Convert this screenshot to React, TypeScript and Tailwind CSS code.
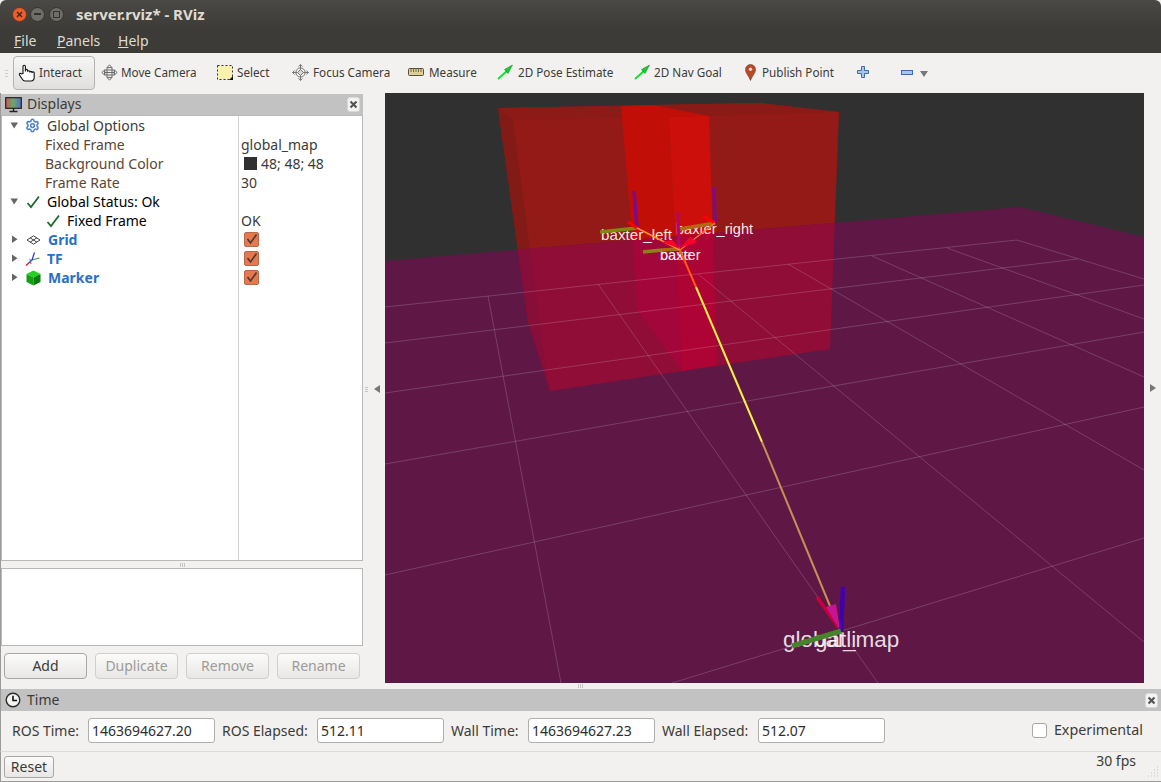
import { Settings } from 'lucide-react';

const floor = '385,261 1020,207 1144,237 1144,683 385,683';

const boxFaces = [
  { pts: '498,108 760,103 839,112 830,349 682,371 550,391 528,322', above: '#931a17', below: '#8f0d37' },
  { pts: '653,105 760,103 839,112 709,116', above: '#8a1a16', below: '#8f0d37' },
  { pts: '498,108 621,106 669,117 513,120', above: '#8c1a16', below: '#8f0d37' },
  { pts: '498,108 513,120 546,372 550,391 528,322', above: '#821a16', below: '#860e38' },
  { pts: '621,106 653,105 709,116 669,117 682,371 637,310 633,248', above: '#c10f08', below: '#a3063a' },
  { pts: '669,117 709,116 717,365 682,371', above: '#cd0f0c', below: '#ae0435' },
];

const gridLines = [
  [385, 307, 1017, 240],
  [385, 343, 1077, 259],
  [385, 393, 1144, 285],
  [385, 464, 1144, 332],
  [385, 575, 1144, 407],
  [672, 683, 1144, 538],
  [488, 296, 561, 683],
  [598, 284, 878, 683],
  [698, 274, 1144, 642],
  [788, 264, 1144, 470],
  [872, 256, 1144, 377],
  [947, 248, 1144, 319],
  [1017, 240, 1144, 279],
];

function Scene() {
  return (
    <svg viewBox="385 93 759 590" className="block w-[759px] h-[590px] font-['Liberation_Sans',sans-serif]">
      <defs>
        <clipPath id="floor-clip">
          <polygon points={floor} />
        </clipPath>
      </defs>
      <rect x="385" y="93" width="759" height="590" fill="#303030" />
      {boxFaces.map((f) => (
        <polygon key={f.pts} points={f.pts} fill={f.above} />
      ))}
      <polygon points={floor} fill="#5f1846" />
      <g clipPath="url(#floor-clip)">
        {boxFaces.map((f) => (
          <polygon key={f.pts} points={f.pts} fill={f.below} />
        ))}
      </g>
      {gridLines.map((l) => (
        <line key={l.join()} x1={l[0]} y1={l[1]} x2={l[2]} y2={l[3]} stroke="#ffffff" strokeOpacity="0.17" strokeWidth="1" />
      ))}

      <g fill="#ffffff" fillOpacity="0.92">
        <text x="601" y="240" fontSize="15.2">baxter_left</text>
        <text x="676" y="234" fontSize="14.6">baxter_right</text>
        <text x="660" y="260" fontSize="14.6">baxter</text>
        <text x="660" y="260" fontSize="14.6" fillOpacity="0.5">base</text>
        <text x="783" y="647" fontSize="22.5" fillOpacity="0.85">global_map</text>
        <text x="815" y="647" fontSize="22.5" fillOpacity="0.85">gatli</text>
      </g>

      {/* path to global_map */}
      <line x1="680" y1="250" x2="696" y2="287" stroke="#ff5a10" strokeWidth="2" />
      <line x1="696" y1="287" x2="762" y2="442" stroke="#f6f04a" strokeWidth="2" />
      <line x1="762" y1="442" x2="830" y2="606" stroke="#c98f55" strokeWidth="2" />
      <line x1="817" y1="597" x2="839" y2="628" stroke="#c8003c" strokeWidth="3.5" />
      <polygon points="826,607 836,604 840,630" fill="#c81494" />
      <line x1="843" y1="587" x2="841" y2="632" stroke="#4000b0" strokeWidth="4.5" />
      <line x1="841" y1="631" x2="792" y2="646" stroke="#47832a" strokeWidth="5" />

      {/* baxter frames */}
      <line x1="678" y1="212" x2="679" y2="250" stroke="#b0086a" strokeWidth="3" />
      <line x1="634" y1="191" x2="637" y2="228" stroke="#7d0a8c" strokeWidth="3.5" />
      <line x1="714" y1="187" x2="715" y2="223" stroke="#7d0a8c" strokeWidth="3.5" />
      <line x1="600" y1="232" x2="637" y2="228" stroke="#7f8a0c" strokeWidth="3.5" />
      <line x1="680" y1="229" x2="715" y2="223" stroke="#b06a10" strokeWidth="3.5" />
      <line x1="643" y1="252" x2="662" y2="250" stroke="#85880f" strokeWidth="3.5" />
      <line x1="662" y1="250" x2="680" y2="249" stroke="#ac6a10" strokeWidth="3.5" />
      <line x1="628" y1="222" x2="637" y2="228" stroke="#ff0000" strokeWidth="3" />
      <line x1="703" y1="216" x2="715" y2="223" stroke="#ff0000" strokeWidth="3" />
      <line x1="637" y1="228" x2="680" y2="250" stroke="#ff9030" strokeWidth="1.5" />
      <line x1="715" y1="223" x2="680" y2="250" stroke="#ff7030" strokeWidth="1.5" />
      <polygon points="662,242 672,240 680,249" fill="#ff0028" />
      <polygon points="680,248 690,237 697,242" fill="#ff0028" />
    </svg>
  );
}

function CloseBtn() {
  return (
    <div className="w-[13px] h-[15px] rounded-[3px] bg-[#f4f4f3] border border-[#d8d8d8] flex items-center justify-center">
      <svg width="9" height="9" viewBox="0 0 9 9">
        <path d="M1.5 1.5 L7.5 7.5 M7.5 1.5 L1.5 7.5" stroke="#555" strokeWidth="2.2" />
      </svg>
    </div>
  );
}

function Expander({ open }: { open?: boolean }) {
  return (
    <svg width="9" height="9" viewBox="0 0 9 9" className="shrink-0">
      {open ? <path d="M0.5 1.5 H8 L4.2 7.5 Z" fill="#666" /> : <path d="M2 0.5 V8 L7.5 4.2 Z" fill="#666" />}
    </svg>
  );
}

function Check() {
  return (
    <svg width="15" height="14" viewBox="0 0 15 14" className="shrink-0">
      <path d="M1.5 8 L5 12 L13 1.5" fill="none" stroke="#1d6a2a" strokeWidth="1.8" />
    </svg>
  );
}

function OrangeBox() {
  return (
    <div className="ml-[3px] w-[15px] h-[15px] rounded-[2px] bg-[#e5784f] border border-[#b8694a] flex items-center justify-center">
      <svg width="13" height="13" viewBox="0 0 13 13">
        <path d="M2.5 6 L5.5 10 L11.5 1.5" fill="none" stroke="#4a3a30" strokeWidth="1.6" />
      </svg>
    </div>
  );
}

function GridIcon() {
  return (
    <svg width="15" height="10" viewBox="0 0 15 10" className="shrink-0">
      <path d="M7.5 0.8 L14 5 L7.5 9.2 L1 5 Z M4.2 2.9 L10.8 7.1 M10.8 2.9 L4.2 7.1" fill="none" stroke="#444" strokeWidth="1" />
    </svg>
  );
}

function TfIcon() {
  return (
    <svg width="16" height="16" viewBox="0 0 16 16" className="shrink-0">
      <path d="M7 9 L14.5 7" stroke="#2fa82f" strokeWidth="1.2" />
      <path d="M7 9 L9.5 1.5" stroke="#2f2fd0" strokeWidth="1.2" />
      <path d="M7 9 L1 14.5" stroke="#e02020" strokeWidth="1.4" />
      <path d="M5 8 L6 13" stroke="#2f6fd0" strokeWidth="1" />
    </svg>
  );
}

function CubeIcon() {
  return (
    <svg width="15" height="16" viewBox="0 0 15 16" className="shrink-0">
      <polygon points="7.5,0.5 14.5,4 7.5,7.5 0.5,4" fill="#25d025" />
      <polygon points="0.5,4 7.5,7.5 7.5,15.5 0.5,12" fill="#12a012" />
      <polygon points="14.5,4 7.5,7.5 7.5,15.5 14.5,12" fill="#0a7d0a" />
    </svg>
  );
}

function NameCell({ indent, children }: { indent: string; children: React.ReactNode }) {
  return <div className={`h-[19px] flex items-center whitespace-nowrap ${indent}`}>{children}</div>;
}

function ValueRow({ children }: { children?: React.ReactNode }) {
  return <div className="h-[19px] flex items-center pl-[2px] whitespace-nowrap text-[#3c3b37]">{children}</div>;
}

function DisplaysTree() {
  return (
    <div className="h-[446px] flex bg-white border border-[#b9b9b7] text-[14px]">
      <div className="w-[237px] border-r border-[#d4d4d2]">
        <NameCell indent="pl-[8px]">
          <Expander open />
          <Settings size={15} className="ml-[6px] shrink-0 text-[#4f7fc4]" strokeWidth={2.4} />
          <span className="ml-[7px] text-[#3c3b37]">Global Options</span>
        </NameCell>
        <NameCell indent="pl-[43px] text-[#5a4634]">Fixed Frame</NameCell>
        <NameCell indent="pl-[43px] text-[#5a4634]">Background Color</NameCell>
        <NameCell indent="pl-[43px] text-[#5a4634]">Frame Rate</NameCell>
        <NameCell indent="pl-[8px]">
          <Expander open />
          <span className="ml-[7px]"><Check /></span>
          <span className="ml-[6px] text-black">Global Status: Ok</span>
        </NameCell>
        <NameCell indent="pl-[44px]">
          <Check />
          <span className="ml-[6px] text-black">Fixed Frame</span>
        </NameCell>
        <NameCell indent="pl-[8px]">
          <Expander />
          <span className="ml-[7px]"><GridIcon /></span>
          <span className="ml-[7px] font-bold text-[#2a6fc4]">Grid</span>
        </NameCell>
        <NameCell indent="pl-[8px]">
          <Expander />
          <span className="ml-[6px]"><TfIcon /></span>
          <span className="ml-[6px] font-bold text-[#2a6fc4]">TF</span>
        </NameCell>
        <NameCell indent="pl-[8px]">
          <Expander />
          <span className="ml-[7px]"><CubeIcon /></span>
          <span className="ml-[7px] font-bold text-[#2a6fc4]">Marker</span>
        </NameCell>
      </div>
      <div className="flex-1">
        <ValueRow />
        <ValueRow>global_map</ValueRow>
        <ValueRow>
          <span className="ml-[3px] w-[13px] h-[13px] bg-[#303030]" />
          <span className="ml-[4px]">48; 48; 48</span>
        </ValueRow>
        <ValueRow>30</ValueRow>
        <ValueRow />
        <ValueRow>OK</ValueRow>
        <ValueRow><OrangeBox /></ValueRow>
        <ValueRow><OrangeBox /></ValueRow>
        <ValueRow><OrangeBox /></ValueRow>
      </div>
    </div>
  );
}

function PanelButton({ label, disabled, width }: { label: string; disabled?: boolean; width: string }) {
  return (
    <div
      className={`${width} h-[26px] pb-[2px] rounded-[4px] border flex items-center justify-center text-[14px] bg-gradient-to-b from-[#fbfbfa] to-[#e8e7e5] ${
        disabled ? 'border-[#d0cfcd] text-[#9c9b99]' : 'border-[#a8a7a5] text-[#3c3b37]'
      }`}
    >
      {label}
    </div>
  );
}

function ToolArrow() {
  return (
    <svg width="16" height="16" viewBox="0 0 16 16">
      <path d="M1 15 L11 6" stroke="#0fe02a" strokeWidth="1.8" />
      <polygon points="15.5,1 7.5,5.5 11,9.5" fill="#10d02a" stroke="#0a5a1a" strokeWidth="0.4" />
    </svg>
  );
}

function MoveIcon() {
  return (
    <svg width="17" height="17" viewBox="0 0 17 17" fill="#f4f4f4" stroke="#6a6a6a" strokeWidth="1">
      <path d="M8.5 0.8 L11 3.6 H6 Z M8.5 16.2 L11 13.4 H6 Z M0.8 8.5 L3.6 6 V11 Z M16.2 8.5 L13.4 6 V11 Z" />
      <path d="M3.6 6 H13.4 V11 H3.6 Z M6 3.6 V13.4 M11 3.6 V13.4 M3.6 8.5 H13.4" fill="none" />
    </svg>
  );
}

function FocusIcon() {
  return (
    <svg width="17" height="17" viewBox="0 0 17 17" fill="none" stroke="#777" strokeWidth="1">
      <circle cx="8.5" cy="8.5" r="4.6" />
      <path d="M8.5 0.5 V16.5 M0.5 8.5 H16.5" />
      <path d="M6.5 2.6 L8.5 0.6 L10.5 2.6 M6.5 14.4 L8.5 16.4 L10.5 14.4 M2.6 6.5 L0.6 8.5 L2.6 10.5 M14.4 6.5 L16.4 8.5 L14.4 10.5" />
      <path d="M8.5 5.5 L11.5 8.5 L8.5 11.5 L5.5 8.5 Z" fill="#d8d8d8" />
    </svg>
  );
}

function SelectIcon() {
  return (
    <svg width="16" height="15" viewBox="0 0 16 15">
      <rect x="0.5" y="0.5" width="15" height="14" fill="#f9f1ae" stroke="#333" strokeDasharray="2 2" />
      <path d="M16 11 V15 H12 Z" fill="#111" />
    </svg>
  );
}

function RulerIcon() {
  return (
    <svg width="16" height="8" viewBox="0 0 16 8">
      <rect x="0.5" y="0.5" width="15" height="7" rx="1" fill="#dccf95" stroke="#57523c" />
      <path d="M3 1 V4 M5.5 1 V4 M8 1 V4 M10.5 1 V4 M13 1 V4" stroke="#57523c" strokeWidth="0.8" />
    </svg>
  );
}

function PinIcon() {
  return (
    <svg width="11" height="17" viewBox="0 0 11 17">
      <path d="M5.5 16.5 C4 12 0.5 9.5 0.5 5.5 A5 5 0 0 1 10.5 5.5 C10.5 9.5 7 12 5.5 16.5 Z" fill="#b8482a" stroke="#7a3a22" strokeWidth="0.6" />
      <circle cx="5.5" cy="5.3" r="1.7" fill="#f4d8c8" />
    </svg>
  );
}

function PlusIcon() {
  return (
    <svg width="12" height="12" viewBox="0 0 12 12">
      <path d="M4.5 0.5 H7.5 V4.5 H11.5 V7.5 H7.5 V11.5 H4.5 V7.5 H0.5 V4.5 H4.5 Z" fill="#a9c6ea" stroke="#3a6cb0" />
    </svg>
  );
}

function MinusIcon() {
  return (
    <svg width="12" height="5" viewBox="0 0 12 5">
      <rect x="0.5" y="0.5" width="11" height="4" fill="#a9c6ea" stroke="#3a6cb0" />
    </svg>
  );
}

function ToolItem({ width, gap, icon, label }: { width: string; gap: string; icon: React.ReactNode; label: string }) {
  return (
    <div className={`${width} flex items-center whitespace-nowrap -mt-[1px]`}>
      {icon}
      <span className={gap}>{label}</span>
    </div>
  );
}

function Toolbar() {
  return (
    <div className="h-[40px] bg-[#f2f1f0] flex items-center text-[11.7px] text-[#3c3b37]">
      <div className="ml-[5px] w-[3px] flex flex-col gap-[2px]">
        <span className="h-[1px] bg-[#cfcecc]" />
        <span className="h-[1px] bg-[#cfcecc]" />
        <span className="h-[1px] bg-[#cfcecc]" />
      </div>
      <div className="ml-[5px] w-[82px] h-[34px] rounded-[4px] border border-[#b4b3b1] bg-gradient-to-b from-[#f6f6f5] to-[#e0dfdd] flex items-center pl-[4px]">
        <svg width="18" height="18" viewBox="0 0 18 18" className="shrink-0">
          <path
            d="M5 9.5 V2.5 A1.2 1.2 0 0 1 7.4 2.5 V7.5 V6.5 A1.1 1.1 0 0 1 9.6 6.5 V7.8 A1.1 1.1 0 0 1 11.8 7.8 V8.5 A1.1 1.1 0 0 1 14 8.5 V9 A1.1 1.1 0 0 1 16.2 9 V13 C16.2 15.5 15 17 13 17 H7 C5 17 4.5 15.5 3.5 14 L1.5 11 C0.8 9.8 2.3 8.8 3.2 9.8 Z"
            fill="#ffffff"
            stroke="#111111"
            strokeWidth="1.1"
          />
        </svg>
        <span className="ml-[3px]">Interact</span>
      </div>
      <div className="ml-[6px] flex items-center">
        <ToolItem width="w-[116px]" gap="ml-[3px]" icon={<MoveIcon />} label="Move Camera" />
        <ToolItem width="w-[75px]" gap="ml-[4px]" icon={<SelectIcon />} label="Select" />
        <ToolItem width="w-[116px]" gap="ml-[4px]" icon={<FocusIcon />} label="Focus Camera" />
        <ToolItem width="w-[89px]" gap="ml-[5px]" icon={<RulerIcon />} label="Measure" />
        <ToolItem width="w-[137px]" gap="ml-[5px]" icon={<ToolArrow />} label="2D Pose Estimate" />
        <ToolItem width="w-[111px]" gap="ml-[4px]" icon={<ToolArrow />} label="2D Nav Goal" />
        <ToolItem width="w-[112px]" gap="ml-[6px]" icon={<PinIcon />} label="Publish Point" />
        <div className="w-[44px] -mt-[2px]"><PlusIcon /></div>
        <div className="flex items-center -mt-[1px]">
          <MinusIcon />
          <svg width="8" height="6" viewBox="0 0 8 6" className="ml-[7px] mt-[4px]">
            <path d="M0 0 H8 L4 6 Z" fill="#777" />
          </svg>
        </div>
      </div>
    </div>
  );
}

function TimeField({ label, labelWidth, value, spaced }: { label: string; labelWidth: string; value: string; spaced?: boolean }) {
  return (
    <div className={`flex items-center ${spaced ? 'ml-[7px]' : ''}`}>
      <span className={`${labelWidth} whitespace-nowrap`}>{label}</span>
      <div className="w-[127px] h-[25px] bg-white border border-[#b0afad] rounded-[3px] flex items-center pl-[3px] text-[#2e2d2a]">{value}</div>
    </div>
  );
}

function SideArrow({ left }: { left?: boolean }) {
  return (
    <svg width="6" height="8" viewBox="0 0 6 8">
      {left ? <path d="M6 0 V8 L0 4 Z" fill="#777" /> : <path d="M0 0 V8 L6 4 Z" fill="#777" />}
    </svg>
  );
}

export default function App() {
  return (
    <div className="w-[1161px] h-[782px] overflow-hidden bg-[#f2f1f0] font-['Noto_Sans',sans-serif] text-[#3c3b37] border-b border-[#9a9a98]">
      {/* Title bar */}
      <div className="h-[29px] pb-[1px] rounded-t-[6px] bg-gradient-to-b from-[#4a4945] to-[#3c3b37] flex items-center pl-[12px]">
        <div className="w-[15px] h-[15px] rounded-full bg-[#e9602f] border border-[#6b3320] flex items-center justify-center">
          <svg width="7" height="7" viewBox="0 0 7 7">
            <path d="M1 1 L6 6 M6 1 L1 6" stroke="#4a1e10" strokeWidth="1.3" />
          </svg>
        </div>
        <div className="ml-[3px] w-[15px] h-[15px] rounded-full bg-[#6e6d68] border border-[#33322f] flex items-center justify-center">
          <div className="w-[7px] h-[1.5px] bg-[#33322f]" />
        </div>
        <div className="ml-[4px] w-[15px] h-[15px] rounded-full bg-[#6e6d68] border border-[#33322f] flex items-center justify-center">
          <div className="w-[7px] h-[7px] border border-[#33322f]" />
        </div>
        <span className="ml-[12px] text-[15px] font-bold text-[#dfdbd2]">server.rviz* - RViz</span>
      </div>

      {/* Menu bar */}
      <div className="h-[24px] pb-[2px] bg-[#3c3b37] flex items-center pl-[14px] text-[14px] text-[#dfdbd2]">
        <span className="w-[43px]"><span className="underline">F</span>ile</span>
        <span className="w-[61px]"><span className="underline">P</span>anels</span>
        <span><span className="underline">H</span>elp</span>
      </div>

      <Toolbar />

      {/* Main area */}
      <div className="h-[596px] flex">
        <div className="w-[363px] border-l border-[#9a9a98] pt-[1px] flex flex-col">
          <div className="h-[21px] bg-[#c2c2c2] flex items-center pl-[4px] pr-[3px] text-[14px]">
            <svg width="17" height="16" viewBox="0 0 17 16">
              <defs>
                <linearGradient id="screen" x1="0" x2="1" y1="0" y2="0">
                  <stop offset="0" stopColor="#c85a5a" />
                  <stop offset="0.5" stopColor="#6aa86a" />
                  <stop offset="1" stopColor="#5a6ac8" />
                </linearGradient>
              </defs>
              <rect x="0.7" y="0.7" width="15.6" height="10.6" fill="url(#screen)" stroke="#222" strokeWidth="1.2" />
              <path d="M8.5 11 V14 M4.5 14.5 H12.5" stroke="#222" strokeWidth="1.4" />
            </svg>
            <span className="ml-[5px] flex-1 -mt-[2px]">Displays</span>
            <CloseBtn />
          </div>
          <DisplaysTree />
          <div className="h-[7px] flex items-center justify-center gap-[1px]">
            <span className="w-[1px] h-[4px] bg-[#c4c4c2]" />
            <span className="w-[1px] h-[4px] bg-[#c4c4c2]" />
            <span className="w-[1px] h-[4px] bg-[#c4c4c2]" />
          </div>
          <div className="h-[78px] bg-white border border-[#b9b9b7]" />
          <div className="mt-[7px] flex pl-[3px] text-[14px]">
            <PanelButton label="Add" width="w-[83px]" />
            <div className="ml-[8px]"><PanelButton label="Duplicate" disabled width="w-[83px]" /></div>
            <div className="ml-[8px]"><PanelButton label="Remove" disabled width="w-[83px]" /></div>
            <div className="ml-[8px]"><PanelButton label="Rename" disabled width="w-[83px]" /></div>
          </div>
        </div>

        <div className="w-[22px] flex items-center pl-[2px]">
          <div className="flex flex-col gap-[1px] mr-[6px] -mt-[4px]">
            <span className="w-[3px] h-[1px] bg-[#c4c4c2]" />
            <span className="w-[3px] h-[1px] bg-[#c4c4c2]" />
            <span className="w-[3px] h-[1px] bg-[#c4c4c2]" />
          </div>
          <div className="-mt-[4px]"><SideArrow left /></div>
        </div>

        <div className="w-[759px] flex flex-col">
          <Scene />
          <div className="h-[6px] flex items-center pl-[193px] gap-[1px]">
            <span className="w-[1px] h-[4px] bg-[#c4c4c2]" />
            <span className="w-[1px] h-[4px] bg-[#c4c4c2]" />
            <span className="w-[1px] h-[4px] bg-[#c4c4c2]" />
          </div>
        </div>

        <div className="flex-1 flex items-center justify-center -mt-[6px] pl-[1px]">
          <SideArrow />
        </div>
      </div>

      {/* Time panel */}
      <div className="border-l border-[#9a9a98] h-[22px] bg-[#c2c2c2] flex items-center pl-[4px] pr-[3px] text-[14px]">
        <svg width="16" height="16" viewBox="0 0 16 16">
          <circle cx="8" cy="8" r="6.8" fill="#f4f4f2" stroke="#2b2b2b" strokeWidth="1.4" />
          <path d="M8 3.8 V8.5 H12" fill="none" stroke="#111" strokeWidth="1.6" />
        </svg>
        <span className="ml-[6px] flex-1 -mt-[2px]">Time</span>
        <CloseBtn />
      </div>
      <div className="border-l border-[#9a9a98] h-[40px] flex items-center pl-[11px] pb-[2px] text-[14px]">
        <TimeField label="ROS Time:" labelWidth="w-[76px]" value="1463694627.20" />
        <TimeField spaced label="ROS Elapsed:" labelWidth="w-[95px]" value="512.11" />
        <TimeField spaced label="Wall Time:" labelWidth="w-[77px]" value="1463694627.23" />
        <TimeField spaced label="Wall Elapsed:" labelWidth="w-[96px]" value="512.07" />
        <div className="ml-auto pr-[18px] flex items-center">
          <div className="w-[15px] h-[15px] rounded-[3px] bg-white border border-[#a8a7a5]" />
          <span className="ml-[7px] text-[14.3px]">Experimental</span>
        </div>
      </div>
      <div className="border-l border-[#9a9a98] h-[30px] border-t border-t-[#dcdbd9] flex items-center pl-[3px] pr-[1px] text-[14px] justify-between">
        <div className="w-[50px] h-[22px] rounded-[3px] border border-[#a8a7a5] bg-gradient-to-b from-[#fbfbfa] to-[#e8e7e5] flex items-center justify-center">Reset</div>
        <div className="flex items-end">
          <span className="-mt-[6px] mb-[6px]">30 fps</span>
          <svg width="15" height="12" viewBox="0 0 15 12" className="ml-[9px]">
            <path d="M12 2 h1 M9 5 h1 M12 5 h1 M6 8 h1 M9 8 h1 M12 8 h1 M3 11 h1 M6 11 h1 M9 11 h1 M12 11 h1" stroke="#c8c7c5" strokeWidth="1" />
          </svg>
        </div>
      </div>
    </div>
  );
}
